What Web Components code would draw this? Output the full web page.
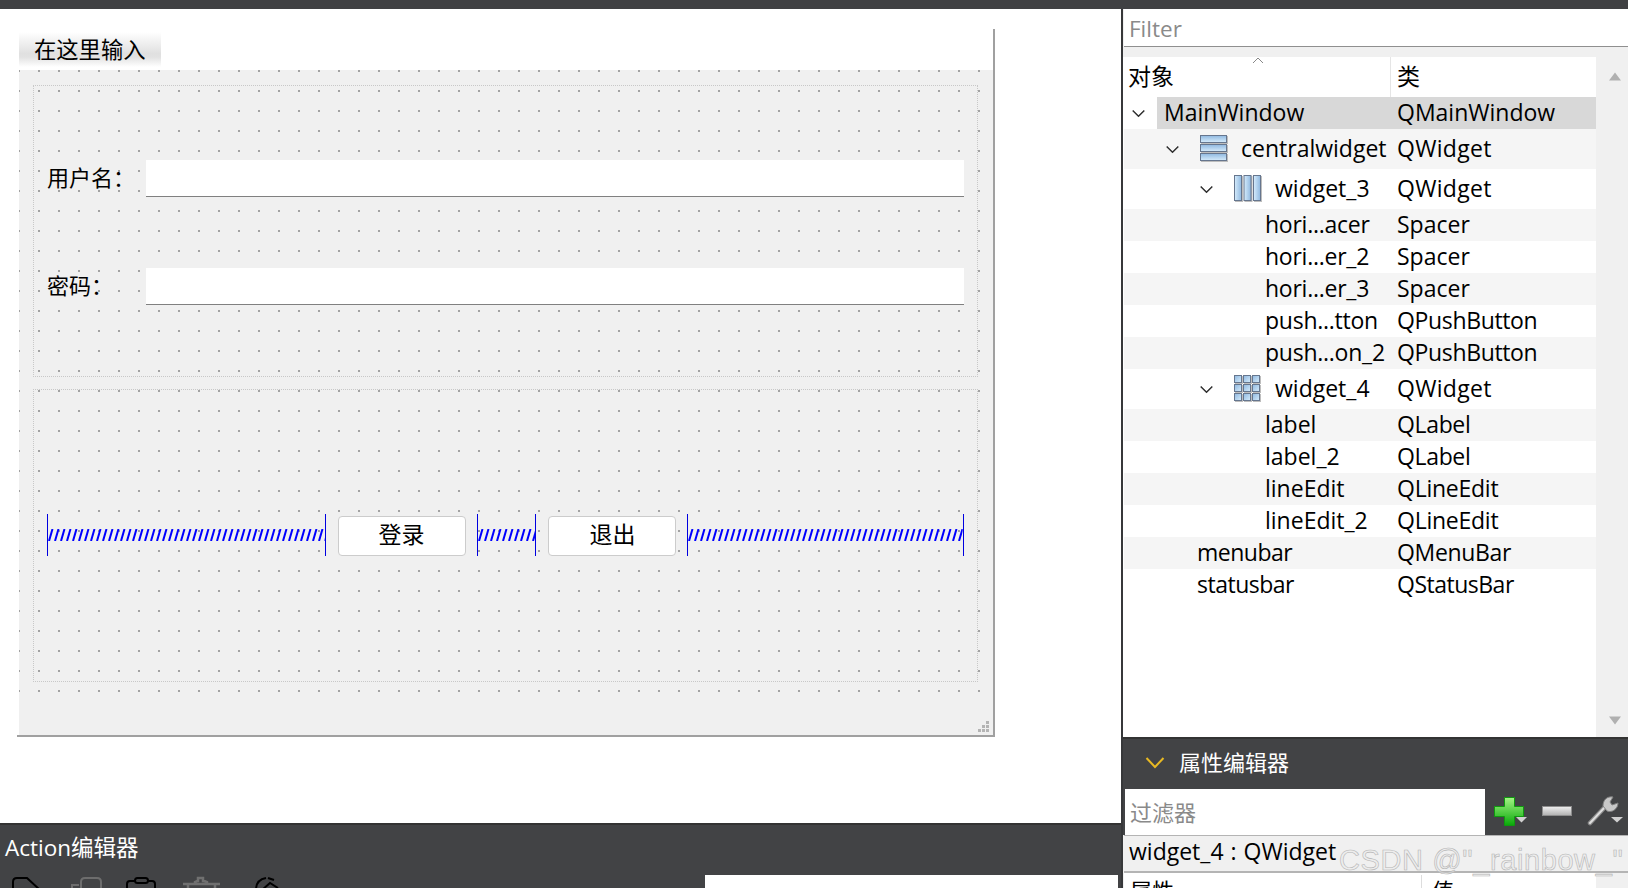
<!DOCTYPE html>
<html><head><meta charset="utf-8"><title>Qt Designer</title>
<style>
html,body{margin:0;padding:0;width:1628px;height:888px;overflow:hidden;background:#fff}
body{font:22px/1.2 "Open Sans","Noto Sans CJK SC","Noto Sans",sans-serif;color:#000}
</style></head><body>
<designer-app></designer-app>
<script>
function el(name,html,css){
  customElements.define(name,class extends HTMLElement{
    connectedCallback(){ if(this.shadowRoot) return;
      const r=this.attachShadow({mode:'open'});
      const a=k=>this.getAttribute(k)||'';
      r.innerHTML='<style>'+css+'</style>'+(typeof html==='function'?html(a,this):html);
    }
  });
}
el('qt-spacer',`<svg width="100%" height="42"><defs><pattern id="z" width="6" height="12" patternUnits="userSpaceOnUse" y="15"><path d="M1 12 L4.500 0" stroke="#0000ff" stroke-width="2" fill="none"/></pattern></defs><rect x="0" y="15" width="100%" height="12" fill="url(#z)"/></svg>`,
 `:host{display:block;height:42px;line-height:0;box-sizing:border-box;border-left:1px solid #0000e0;border-right:1px solid #0000e0}svg{display:block}`);
el('qt-button','<slot></slot>',`:host{display:flex;align-items:center;justify-content:center;box-sizing:border-box;width:128px;height:40px;padding-bottom:2px;background:#fff;border:1px solid #cccccc;border-radius:4px;font-size:23px;margin-top:2px}`);
el('qt-field',`<span><slot></slot></span><div></div>`,`:host{display:flex;align-items:center;height:37px}span{width:99px;font-size:22px;white-space:nowrap;padding-bottom:2px}div{flex:1;height:36px;background:#fff;border-bottom:1px solid #808080}`);
el('form-window',`
<div class="menu"><div class="item">在这里输入</div></div>
<div class="central">
  <div class="box top">
    <div class="rows"><qt-field>用户名：</qt-field><qt-field>密码：</qt-field></div>
  </div>
  <div class="box bottom">
    <div class="btns">
      <qt-spacer style="width:279px"></qt-spacer><qt-button style="margin-left:12px;margin-right:11px">登录</qt-button>
      <qt-spacer style="width:60px"></qt-spacer><qt-button style="margin-left:12px;margin-right:11px">退出</qt-button>
      <qt-spacer style="width:277px"></qt-spacer>
    </div>
  </div>
</div>
<div class="status"><svg width="12" height="12" viewBox="0 0 12 12"><path fill="#b4b4b4" d="M8 0h3v3H8zM4 4h3v3H4zM8 4h3v3H8zM0 8h3v3H0zM4 8h3v3H4zM8 8h3v3H8z"/></svg></div>`,
`:host{display:flex;flex-direction:column;width:978px;height:708px;box-sizing:border-box;border-right:2px solid #a0a0a0;border-bottom:2px solid #a0a0a0}
.menu{height:41px;padding-top:3px;box-sizing:border-box}
.item{margin-left:2px;width:142px;height:35px;box-sizing:border-box;padding-left:15px;line-height:35px;font-size:22.300px;background:linear-gradient(#fff 0,#e0e0e0 62%,#e2e2e2 72%,#fff 100%);white-space:nowrap}
.central{margin-left:2px;height:630px;background-color:#f0f0f0;box-sizing:border-box;padding:15px 15px 0 14px;display:flex;flex-direction:column;gap:12px;
 background-image:conic-gradient(at 2px 2px,transparent 0 270deg,#a2a2a2 270deg 360deg);background-size:20px 20px;background-position:-1px 0}
.box{border:1px dotted #c8c8c8;box-sizing:border-box}
.top{height:292px;padding:74px 13px 0 13px}
.rows{display:flex;flex-direction:column;gap:71px}
.bottom{height:293px;padding:124px 13px 0 13px}
.btns{display:flex;align-items:flex-start}
.status{flex:1;margin-left:2px;background:#f0f0f0;display:flex;align-items:flex-end;justify-content:flex-end;padding:0 3px 2px 0}`);
el('tree-row',(a,t)=>{
  const chev=t.hasAttribute('open')?`<svg width="13" height="8" viewBox="0 0 13 8"><path d="M.7 1 6.500 6.800 12.300 1" fill="none" stroke="#303030" stroke-width="1.5"/></svg>`:'';
  return `<div class="n" style="padding-left:${a('x')}px"><span class="cb" style="left:${a('cx')}px">${chev}</span><slot name="icon"></slot><span class="nm">${a('name')}</span></div><div class="k">${a('cls')}</div>`;
},`:host{display:flex;align-items:center;height:var(--h,32px);position:relative;font-size:23px;white-space:nowrap;width:472px;box-sizing:border-box}
:host([alt]){background:#f5f5f5}
:host([sel]){background:linear-gradient(90deg,#fff 0,#fff 33px,#d8d8d8 33px)}
.nm{letter-spacing:var(--nls,0)}
.n{width:266px;box-sizing:border-box;display:flex;align-items:center}
::slotted(stack-icon){margin-right:13px}
.k{padding-left:7px;letter-spacing:var(--kls,0)}
.cb{position:absolute;top:50%;transform:translateY(-50%);line-height:0}`);
el('stack-icon',a=>{
  const k=a('kind');let s='';
  const bar=(x,y,w,h)=>`<rect x="${x+1}" y="${y+1}" width="${w}" height="${h}" fill="#bdbdbd"/><rect x="${x+.5}" y="${y+.5}" width="${w-1}" height="${h-1}" fill="url(#g)" stroke="#66768e"/>`;
  if(k==='v') for(let i=0;i<3;i++) s+=bar(0,0+i*9,27,8);
  if(k==='h') for(let i=0;i<3;i++) s+=bar(0+i*9.500,0,8,26);
  if(k==='g') for(let i=0;i<3;i++)for(let j=0;j<3;j++) s+=bar(0+i*9,0+j*9,8,8);
  const dir=k==='v'?'x1="0" y1="0" x2="0" y2="1"':k==='h'?'x1="1" y1="0" x2="0" y2="0"':'x1="0" y1="0" x2="1" y2="1"';
  return `<svg width="28" height="28" viewBox="0 0 28 28"><defs><linearGradient id="g" ${dir}><stop offset="0" stop-color="#8fb8e0"/><stop offset="1" stop-color="#d6ecfc"/></linearGradient></defs>${s}</svg>`;
},`:host{display:block;line-height:0;width:28px;height:28px}`);
el('object-tree',`
<div class="hdr"><div class="h1">对象<svg class="sort" width="12" height="7" viewBox="0 0 12 7"><path d="M1 6 6 1 11 6" fill="none" stroke="#888" stroke-width="1"/></svg></div><div class="h2">类</div></div>
<slot></slot>`,
`:host{display:block;width:472px;font-size:23px}
.hdr{height:40px;background:#fff;display:flex;font-size:23px}
.h1{width:267px;box-sizing:border-box;padding:1px 0 0 4px;border-right:1px solid #e5e5e5;position:relative;line-height:36px}
.h2{padding:1px 0 0 6px;line-height:36px}
.sort{position:absolute;left:128px;top:0}`);
el('right-panel',`
<div class="filter">Filter</div>
<div class="gap"></div>
<div class="treewrap">
  <object-tree>
    <tree-row sel open cx="8" x="40" name="MainWindow" cls="QMainWindow"></tree-row>
    <tree-row alt open style="--h:40px;--kls:.3px" cx="42" x="76" name="centralwidget" cls="QWidget"><stack-icon slot="icon" kind="v"></stack-icon></tree-row>
    <tree-row open style="--h:40px;--kls:.3px" cx="76" x="110" name="widget_3" cls="QWidget"><stack-icon slot="icon" kind="h"></stack-icon></tree-row>
    <tree-row alt style="--nls:-.25px" x="141" name="hori...acer" cls="Spacer"></tree-row>
    <tree-row style="--nls:-.25px" x="141" name="hori...er_2" cls="Spacer"></tree-row>
    <tree-row alt style="--nls:-.25px" x="141" name="hori...er_3" cls="Spacer"></tree-row>
    <tree-row style="--nls:-.25px;--kls:-.35px" x="141" name="push...tton" cls="QPushButton"></tree-row>
    <tree-row alt style="--nls:-.25px;--kls:-.35px" x="141" name="push...on_2" cls="QPushButton"></tree-row>
    <tree-row open style="--h:40px;--kls:.3px" cx="76" x="110" name="widget_4" cls="QWidget"><stack-icon slot="icon" kind="g"></stack-icon></tree-row>
    <tree-row alt style="--kls:-.35px" x="141" name="label" cls="QLabel"></tree-row>
    <tree-row style="--kls:-.35px" x="141" name="label_2" cls="QLabel"></tree-row>
    <tree-row alt style="--kls:-.25px" x="141" name="lineEdit" cls="QLineEdit"></tree-row>
    <tree-row style="--kls:-.25px" x="141" name="lineEdit_2" cls="QLineEdit"></tree-row>
    <tree-row alt style="--nls:-.5px;--kls:-.35px" x="73" name="menubar" cls="QMenuBar"></tree-row>
    <tree-row style="--nls:-.5px;--kls:-.5px" x="73" name="statusbar" cls="QStatusBar"></tree-row>
  </object-tree>
  <div class="sb"><svg width="12" height="9" viewBox="0 0 12 9"><path d="M0 8.500 6 .5 12 8.500z" fill="#b0b0b0"/></svg><svg width="12" height="9" viewBox="0 0 12 9"><path d="M0 .5 6 8.500 12 .5z" fill="#b0b0b0"/></svg></div>
</div>
<div class="title"><svg width="20" height="14" viewBox="0 0 20 14"><path d="M1.500 2 10 11 18.500 2" fill="none" stroke="#e8b923" stroke-width="2"/></svg><span>属性编辑器</span></div>
<div class="tools">
  <div class="in">过滤器</div>
  <svg class="t1" width="36" height="32" viewBox="0 0 36 32"><defs><linearGradient id="gp" x1="0" y1="0" x2="0" y2="1"><stop offset="0" stop-color="#a4f585"/><stop offset="1" stop-color="#08a808"/></linearGradient></defs><path d="M10.500.5h10v9h9v10h-9v9h-10v-9h-10v-10h10z" fill="url(#gp)" stroke="#0f9a0f"/><path d="M22 20h11l-5.500 5.500z" fill="#d0d0d0"/></svg>
  <svg class="t2" width="30" height="10" viewBox="0 0 30 10"><defs><linearGradient id="gm" x1="0" y1="0" x2="0" y2="1"><stop offset="0" stop-color="#f0f0f0"/><stop offset="1" stop-color="#b0b0b0"/></linearGradient></defs><rect x=".5" y=".5" width="29" height="9" fill="url(#gm)" stroke="#8d8d8d"/></svg>
  <svg class="t3" width="38" height="34" viewBox="0 0 38 34"><path d="M3 29 18 13" stroke="#8b8b8b" stroke-width="4.500" stroke-linecap="round" fill="none"/><path d="M3 29 18 13" stroke="#dedede" stroke-width="2" stroke-linecap="round" fill="none"/><path d="M16 12c0-6 4-10 10-9l-3 5 2 3 6-2c0 6-6 10-11 8z" fill="#c8c8c8" stroke="#808080"/><path d="M24 23h12l-6 5.500z" fill="#d0d0d0"/></svg>
</div>
<div class="cls">widget_4 : QWidget<span class="wm">CSDN @"_rainbow_"</span></div>
<div class="phdr"><div class="p">属性</div><div class="v">值</div></div>`,
`:host{display:block;width:505px;height:879px;overflow:hidden;font-size:22px;position:relative;background:#f0f0f0}
.filter{height:38px;box-sizing:border-box;border-bottom:1px solid #8f8f8f;padding-left:5px;line-height:39px;color:#8a8a8a;margin-left:1px;background:#fff;font-size:22.500px}
.gap{height:10px;background:#f0f0f0}
.treewrap{height:680px;display:flex;background:#fff}
object-tree{height:680px;background:#fff;margin-left:1px}
.sb{flex:1;background:#f0f0f0;display:flex;flex-direction:column;justify-content:space-between;align-items:center;padding:15px 0 12px 5px;box-sizing:border-box}
.title{height:51px;background:#424345;box-sizing:border-box;border-top:2px solid #333;display:flex;align-items:center;padding:0 0 2px 22px;color:#fff;gap:14px}
.tools{height:47px;background:#424345;position:relative}
.in{position:absolute;left:2px;top:1px;width:360px;height:46px;background:#fff;color:#8a8a8a;line-height:46px;padding-left:5px;box-sizing:border-box}
.t1{position:absolute;left:371px;top:9px}.t2{position:absolute;left:419px;top:18px}.t3{position:absolute;left:464px;top:6px}
.cls{height:38px;box-sizing:border-box;background:#f0f0f0;border-top:1px solid #b4b4b4;border-bottom:2px solid #b4b4b4;margin-left:1px;padding-left:5px;line-height:31px;font-size:23px;word-spacing:1px;position:relative;white-space:nowrap}
.wm{position:absolute;left:215px;top:4px;font:29px/40px "Liberation Sans",sans-serif;word-spacing:0;letter-spacing:.6px;color:rgba(235,235,235,.55);-webkit-text-stroke:.6px #b5b5b5;white-space:nowrap}
.phdr{height:30px;display:flex;margin-left:1px;line-height:30px;padding-top:2px;box-sizing:border-box;width:472px;background:#fff}
.p{width:298px;padding-left:6px;box-sizing:border-box;border-right:1px solid #ddd}.v{padding-left:10px}`);
el('action-panel',`
<div class="t">Action编辑器</div>
<div class="row">
 <svg width="300" height="13" viewBox="0 875 300 13">
  <g fill="none" stroke="#000" stroke-width="2">
   <path d="M13 890V882q0-4 4-4h10l13 12"/>
   <path d="M127 890V884q0-3 3-3h5M148 881h4q3 0 3 3v6"/><rect x="135" y="878" width="13" height="5" rx="2.500"/>
   <path d="M256 890c0-7 4-11 10-12M268 878l6 2M262 890l8-7 8 5"/>
  </g>
  <g fill="none" stroke="#6d6d6d" stroke-width="2">
   <path d="M72 890v-5h7M81 890V882q0-4 4-4h12q4 0 4 4v8"/>
  </g>
  <g fill="none" stroke="#707070" stroke-width="2.500">
   <path d="M183 884h37M188 884v6M215 884v6M195 884v-2q2-1 3-1v-3h5v3q2 0 4 1v2"/>
  </g>
 </svg>
 <div class="w"></div>
</div>`,
`:host{display:block;height:65px;background:#424345;border-top:2px solid #333;box-sizing:border-box;color:#fff;overflow:hidden}
.t{height:50px;line-height:46px;padding-left:5px;font-size:22.500px;white-space:nowrap}
.row{display:flex;height:13px;line-height:0}
.w{margin-left:405px;width:413px;background:#fff;height:13px}`);
el('designer-app',`
<div class="top"></div>
<div class="main">
  <div class="left">
    <div class="canvas"><form-window></form-window></div>
    <action-panel></action-panel>
  </div>
  <div class="sep"></div>
  <right-panel></right-panel>
</div>`,
`:host{display:block;width:1628px;height:888px;overflow:hidden;background:#fff}
.top{height:9px;background:#404143}
.main{display:flex;height:879px}
.left{width:1121px;display:flex;flex-direction:column}
.canvas{height:814px;padding:20px 0 0 17px;box-sizing:border-box;background:#fff}
.sep{width:2px;background:#37383a}`);
</script>
</body></html>
